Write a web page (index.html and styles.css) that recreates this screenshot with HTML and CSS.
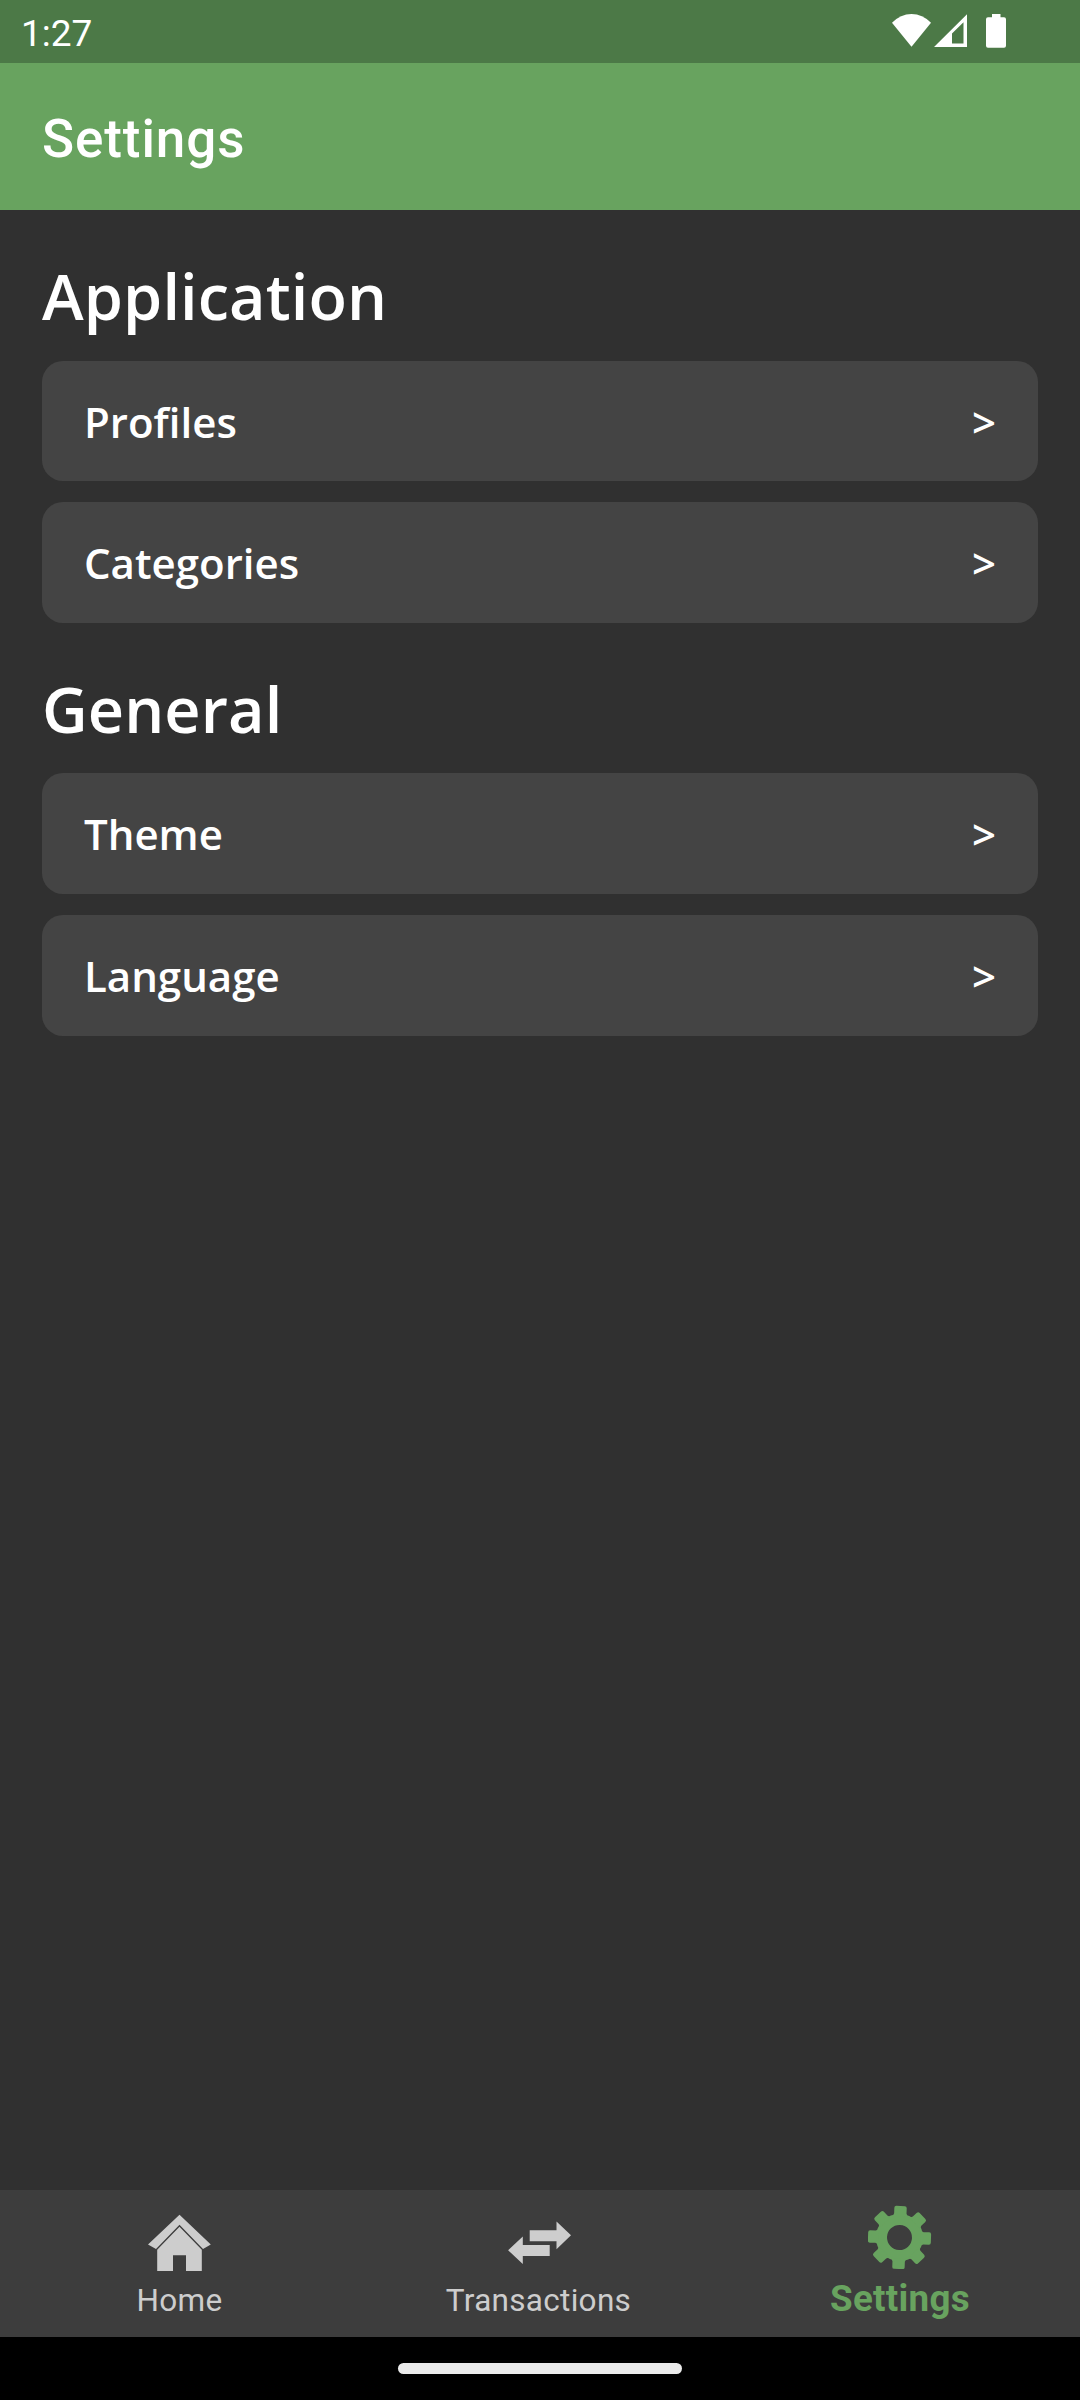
FILE: index.html
```html
<!DOCTYPE html>
<html lang="en">
<head>
<meta charset="utf-8">
<title>Settings</title>
<link rel="stylesheet" href="styles.css">
</head>
<body>
<div class="screen">
  <div class="status-bar">
    <span class="clock">1:27</span>
    <svg class="status-icons" width="120" height="40" viewBox="890 10 120 40" fill="#fff">
      <path d="M892 22.8Q900.500 14 911.500 14T931 22.800L911.500 46.700Z"/>
      <path fill-rule="evenodd" d="M934 47L967 14.300V47ZM952 33.600V43.500H963.500V22.300Z"/>
      <path d="M992 14h8.500v3.300h3.500q2 0 2 2v26.500q0 2-2 2h-16q-2 0-2-2V19.300q0-2 2-2h4Z"/>
    </svg>
  </div>
  <header class="app-bar"><h1 class="title">Settings</h1></header>
  <main class="content">
    <section class="group">
      <h2 class="heading">Application</h2>
      <div class="card short"><span>Profiles</span><span>&gt;</span></div>
      <div class="card"><span>Categories</span><span>&gt;</span></div>
    </section>
    <section class="group">
      <h2 class="heading">General</h2>
      <div class="card"><span>Theme</span><span>&gt;</span></div>
      <div class="card"><span>Language</span><span>&gt;</span></div>
    </section>
  </main>
  <nav class="tabs">
    <div class="tab">
      <svg class="tab-icon" width="64" height="64" viewBox="0.5 0 64 64" fill="currentColor">
        <path d="M32 3.700L63.300 33.500L55.500 38L32 13.700L8.500 38L0.500 33.500Z"/>
        <path d="M32 15.700L54.300 38.700V60H38.500V44.300H25.500V60H9.700V38.700Z"/>
      </svg>
      <span class="label">Home</span>
    </div>
    <div class="tab">
      <svg class="tab-icon" width="64" height="64" viewBox="0.5 0 64 64" fill="currentColor">
        <path d="M22.200 19.300H49V10.500L63.500 24.300L49 38.300V30.300H22.200Z"/>
        <path d="M42.200 34H15.300V25.500L0.600 39.300L15.300 53V45H42.200Z"/>
      </svg>
      <span class="label wide">Transactions</span>
    </div>
    <div class="tab active">
      <svg class="tab-icon" width="64" height="64" viewBox="-31.5 -32.5 64 64">
        <g transform="rotate(2)">
          <circle r="18" fill="none" stroke="currentColor" stroke-width="11"/>
          <g fill="currentColor">
            <path id="tooth" d="M-7.500 -21L-6.200 -24V-29.500Q-6.200 -31.500 -4.200 -31.500H4.200Q6.200 -31.500 6.200 -29.500V-24L7.500 -21Z"/>
            <use href="#tooth" transform="rotate(45)"/>
            <use href="#tooth" transform="rotate(90)"/>
            <use href="#tooth" transform="rotate(135)"/>
            <use href="#tooth" transform="rotate(180)"/>
            <use href="#tooth" transform="rotate(225)"/>
            <use href="#tooth" transform="rotate(270)"/>
            <use href="#tooth" transform="rotate(315)"/>
          </g>
        </g>
      </svg>
      <span class="label">Settings</span>
    </div>
  </nav>
  <div class="gesture-bar"><div class="handle"></div></div>
</div>
</body>
</html>
```
FILE: styles.css
```css
* { box-sizing: border-box; }
body { margin: 0; background: #303030; }
h1, h2 { margin: 0; }
.screen {
  width: 1080px;
  height: 2400px;
  display: flex;
  flex-direction: column;
  background: #303030;
  color: #fff;
  font-family: Roboto, sans-serif;
}
.status-bar {
  height: 63px;
  flex: none;
  display: flex;
  justify-content: space-between;
  padding: 10px 70px 0 21px;
  background: #4c7947;
}
.clock { font-size: 37px; line-height: 48px; }
.status-icons { display: block; }
.app-bar {
  height: 147px;
  flex: none;
  display: flex;
  align-items: center;
  padding-left: 42px;
  background: #68a35f;
}
.title {
  font-size: 53px;
  line-height: 62px;
  font-weight: 500;
  letter-spacing: 0.9px;
  padding-top: 4px;
}
.content {
  flex: 1;
  display: flex;
  flex-direction: column;
  gap: 43px;
  padding: 43px 42px 0;
  font-family: "Open Sans", sans-serif;
  font-weight: 600;
}
.group { display: flex; flex-direction: column; }
.heading { font-size: 63px; line-height: 86px; font-weight: 600; letter-spacing: 0.1px; }
.card {
  height: 121px;
  display: flex;
  justify-content: space-between;
  padding: 32px 42px 0;
  margin-top: 21px;
  border-radius: 21px;
  background: #444;
  font-size: 42px;
  line-height: 57px;
}
.short { height: 120px; margin-top: 22px; }
.tabs {
  height: 147px;
  flex: none;
  display: grid;
  grid-template-columns: repeat(3, 1fr);
  background: #3d3d3d;
  color: #cdcdcd;
}
.tab { display: flex; flex-direction: column; align-items: center; padding-top: 21px; }
.tab-icon { display: block; }
.label {
  font-size: 31.5px;
  line-height: 38px;
  letter-spacing: 0.3px;
  margin: 7px 1px 0 0;
}
.wide { margin-right: 3px; }
.active { padding-top: 15px; color: #68a35f; }
.active .label {
  font-size: 36.75px;
  line-height: 44px;
  font-weight: 700;
  margin: 8px 0 0;
}
.gesture-bar {
  height: 63px;
  flex: none;
  display: flex;
  justify-content: center;
  align-items: center;
  background: #000;
}
.handle { width: 284px; height: 11px; border-radius: 6px; background: #ebebeb; }
```
